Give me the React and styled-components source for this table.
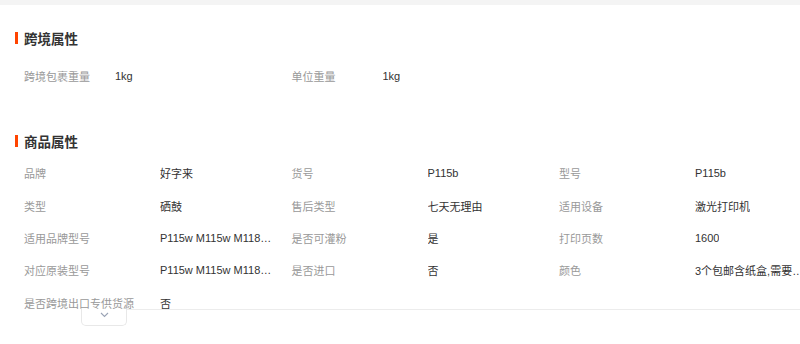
import React from 'react';
import styled, { createGlobalStyle } from 'styled-components';

const GlobalStyle = createGlobalStyle`
  html, body {
    margin: 0;
    padding: 0;
    background: #fff;
  }
  body {
    font-family: "Liberation Sans", "Noto Sans CJK SC", sans-serif;
    width: 800px;
    height: 344px;
    overflow: hidden;
  }
`;

const TopBand = styled.div`
  height: 5px;
  background-color: #f4f4f4;
`;

const Section = styled.section`
  padding-left: 15px;
  margin-top: ${(p) => p.$top}px;
`;

const Title = styled.h3`
  display: flex;
  align-items: center;
  gap: 6px;
  margin: 0;
  height: 20px;
  font-size: 13.5px;
  font-weight: bold;
  color: #333;
  font-family: "Noto Sans CJK SC", sans-serif;

  &::before {
    content: '';
    width: 3px;
    height: 12px;
    background-color: #ff4400;
  }
`;

const Grid = styled.div`
  display: grid;
  grid-template-columns: repeat(3, 267.5px);
  grid-auto-rows: 32.3px;
  padding-left: 9px;
  margin-top: ${(p) => p.$gap}px;
  max-height: ${(p) => (p.$clip ? `${p.$clip}px` : 'none')};
  overflow: hidden;
`;

const Item = styled.div`
  display: flex;
  align-items: center;
  font-size: 11px;
  white-space: nowrap;
  min-width: 0;
`;

const Label = styled.span`
  width: ${(p) => p.$w}px;
  flex-shrink: 0;
  color: #999;
`;

const Value = styled.span`
  color: #333;
  max-width: 114px;
  overflow: hidden;
  text-overflow: ellipsis;
`;

const Footer = styled.div`
  display: flex;
  align-items: flex-start;
  padding-left: 81px;
`;

const ExpandButton = styled.button`
  display: flex;
  justify-content: center;
  align-items: center;
  width: 46px;
  height: 17px;
  padding: 0 0 4px;
  background: #fff;
  border: 1px solid #e8e8e8;
  border-top: none;
  border-radius: 0 0 5px 5px;
  cursor: pointer;
`;

const Rule = styled.div`
  flex: 1;
  border-top: 1px solid #ececec;
`;

const crossBorder = [
  ['跨境包裹重量', '1kg'],
  ['单位重量', '1kg'],
];

const goodsAttrs = [
  ['品牌', '好字来'],
  ['货号', 'P115b'],
  ['型号', 'P115b'],
  ['类型', '硒鼓'],
  ['售后类型', '七天无理由'],
  ['适用设备', '激光打印机'],
  ['适用品牌型号', 'P115w M115w M118z M118w'],
  ['是否可灌粉', '是'],
  ['打印页数', '1600'],
  ['对应原装型号', 'P115w M115w M118z M118w'],
  ['是否进口', '否'],
  ['颜色', '3个包邮含纸盒,需要更多请联系'],
  ['是否跨境出口专供货源', '否'],
];

const App = () => (
  <>
    <GlobalStyle />
    <TopBand />
    <Section $top={23}>
      <Title>跨境属性</Title>
      <Grid $gap={12}>
        {crossBorder.map(([k, v]) => (
          <Item key={k}>
            <Label $w={91}>{k}</Label>
            <Value>{v}</Value>
          </Item>
        ))}
      </Grid>
    </Section>
    <Section $top={39}>
      <Title>商品属性</Title>
      <Grid $gap={6} $clip={152}>
        {goodsAttrs.map(([k, v]) => (
          <Item key={k}>
            <Label $w={136}>{k}</Label>
            <Value>{v}</Value>
          </Item>
        ))}
      </Grid>
    </Section>
    <Footer>
      <ExpandButton aria-label="展开">
        <svg width="9" height="6" viewBox="0 0 9 6" fill="none">
          <path d="M1 1l3.5 3.5L8 1" stroke="#9aa3b5" strokeWidth="1.1" />
        </svg>
      </ExpandButton>
      <Rule />
    </Footer>
  </>
);

export default App;
